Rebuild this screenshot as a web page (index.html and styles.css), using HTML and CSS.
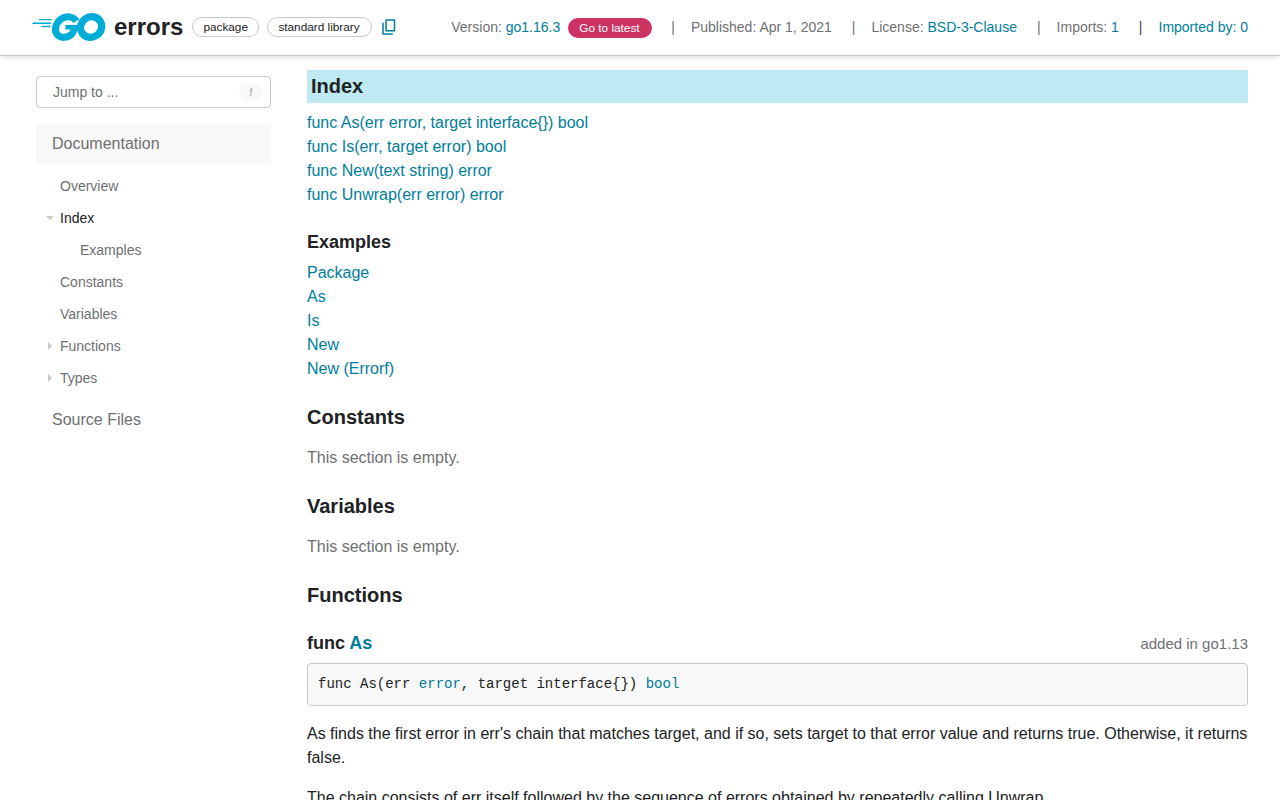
FILE: index.html
```html
<!DOCTYPE html>
<html lang="en">
<head>
<meta charset="utf-8">
<title>errors package</title>
<link rel="stylesheet" href="styles.css">
</head>
<body>
<header class="header">
  <svg class="logo" viewBox="0 0 74 30" aria-label="Go">
    <g fill="#00add8">
      <path d="M6.2 8.3l1-1.4h12.7l-.8 1.4zM0 11.9l1-1.4h18.3l-.5 1.4zM9.3 15.2l.8-1.4h8.4l-.2 1.4z"/>
    </g>
    <g fill="none" stroke="#00add8">
      <ellipse cx="59.1" cy="15" rx="10.8" ry="10.1" stroke-width="7.2" transform="rotate(-32 59.1 15)"/>
      <path stroke-width="7" d="M44.4 9.2C41.4 4.3 33.9 3.3 28.8 7.2C23.4 11.4 21.8 18.4 25.2 22.6C28.7 26.7 35.6 26 39.6 22.2C41.2 20.6 42 18.6 42.4 15.6"/>
      <path stroke-width="4.6" d="M33.4 15.2h12.3"/>
    </g>
  </svg>
  <h1 class="title">errors</h1>
  <span class="chip">package</span>
  <span class="chip chip-lib">standard library</span>
  <svg class="copy" viewBox="0 0 14 16" fill="none" stroke="#007d9c" stroke-width="1.5"><path d="M4.1 1.05h8.4v10.6H4.1zM1 3.8v11.1h9.8"/></svg>
  <div class="details">
    <span>Version: <a>go1.16.3</a></span><span class="latest">Go to latest</span>
    <span class="bar bar-1">|</span><span>Published: Apr 1, 2021</span>
    <span class="bar">|</span><span>License: <a>BSD-3-Clause</a></span>
    <span class="bar">|</span><span>Imports: <a>1</a></span>
    <span class="bar bar-dark">|</span><a>Imported by: 0</a>
  </div>
</header>
<div class="layout">
  <nav class="side">
    <div class="jump"><span>Jump to ...</span><kbd class="key">f</kbd></div>
    <div class="group group-on">Documentation</div>
    <ul class="tree">
      <li>Overview</li>
      <li class="on"><svg class="arrow" viewBox="0 0 10 10"><path d="M1 3h8L5 7z"/></svg>Index</li>
      <li class="sub">Examples</li>
      <li>Constants</li>
      <li>Variables</li>
      <li><svg class="arrow" viewBox="0 0 10 10"><path d="M3 1v8l4-4z"/></svg>Functions</li>
      <li><svg class="arrow" viewBox="0 0 10 10"><path d="M3 1v8l4-4z"/></svg>Types</li>
    </ul>
    <div class="group">Source Files</div>
  </nav>
  <main class="main">
    <h2 class="target">Index</h2>
    <ul class="list">
      <li><a>func As(err error, target interface{}) bool</a></li>
      <li><a>func Is(err, target error) bool</a></li>
      <li><a>func New(text string) error</a></li>
      <li><a>func Unwrap(err error) error</a></li>
    </ul>
    <h3 class="examples">Examples</h3>
    <ul class="list">
      <li><a>Package</a></li>
      <li><a>As</a></li>
      <li><a>Is</a></li>
      <li><a>New</a></li>
      <li><a>New (Errorf)</a></li>
    </ul>
    <h2 class="section">Constants</h2>
    <p class="empty">This section is empty.</p>
    <h2 class="section">Variables</h2>
    <p class="empty">This section is empty.</p>
    <h2 class="section">Functions</h2>
    <h3 class="func"><span>func <a>As</a></span><span class="since">added in go1.13</span></h3>
    <pre class="code">func As(err <a>error</a>, target interface{}) <a>bool</a></pre>
    <p class="text">As finds the first error in err's chain that matches target, and if so, sets target to that error value and returns true. Otherwise, it returns false.</p>
    <p class="text">The chain consists of err itself followed by the sequence of errors obtained by repeatedly calling Unwrap.</p>
  </main>
</div>
</body>
</html>
```
FILE: styles.css
```css
* { box-sizing: border-box; }
html, body { height: 100%; }
body {
  margin: 0;
  display: flex;
  flex-direction: column;
  overflow: hidden;
  background: #fff;
  color: #202224;
  font: 16px/24px Arial, "Liberation Sans", sans-serif;
}
h1, h2, h3, p, ul, pre { margin: 0; padding: 0; }
ul { list-style: none; }
a { color: #007d9c; }
.header {
  flex: none;
  display: flex;
  align-items: center;
  height: 56px;
  padding: 0 32px;
  padding-bottom: 1px;
  border-bottom: 1px solid #c6c8ca;
  box-shadow: 0 2px 5px rgba(0, 0, 0, .12);
}
.logo { width: 74px; height: 30px; }
.title { margin-left: 8px; font-size: 24px; line-height: 30px; }
.chip {
  width: 67px;
  height: 20px;
  margin-left: 9px;
  padding-left: 10px;
  border: 1px solid #c6c8ca;
  border-radius: 10px;
  font-size: 11.8px;
  line-height: 19px;
  white-space: nowrap;
}
.chip-lib { width: 105px; margin-left: 8px; }
.copy { width: 14px; height: 16px; margin-left: 10px; }
.details {
  display: flex;
  align-items: center;
  margin-left: auto;
  color: #6e7072;
  font-size: 14px;
  line-height: 20px;
}
.latest {
  width: 84px;
  height: 20px;
  margin: 2px 0 0 8px;
  padding-left: 11px;
  border-radius: 10px;
  background: #ce3262;
  color: #fff;
  font-size: 11.8px;
}
.bar { margin: 0 16px 0 20px; }
.bar-1 { margin-left: 19px; }
.bar-dark { color: #3e4042; }
.layout { display: flex; }
.side { flex: none; width: 235px; margin: 20px 36px 0; }
.jump {
  display: flex;
  align-items: center;
  justify-content: space-between;
  height: 32px;
  padding: 0 7px 0 16px;
  border: 1px solid #c6c8ca;
  border-radius: 4px;
  color: #6e7072;
  font-size: 14px;
}
.key {
  width: 24px;
  height: 16px;
  border-radius: 8px;
  background: #f8f8f8;
  color: #a8aaac;
  font: 11px/16px Arial, "Liberation Sans", sans-serif;
  text-align: center;
}
.group { padding-left: 16px; color: #6e7072; line-height: 40px; }
.group-on { margin-top: 16px; background: #f8f8f8; }
.tree { padding: 6px 0; color: #6e7072; font-size: 14px; line-height: 32px; }
.tree li { position: relative; padding-left: 24px; }
.tree .sub { padding-left: 44px; }
.tree .on { color: #202224; }
.arrow { position: absolute; left: 9px; top: 11px; width: 10px; height: 10px; fill: #c6c8ca; }
.main { flex: none; width: 941px; padding-top: 14px; }
.target { height: 33px; padding-left: 4px; background: #bfeaf4; font-size: 20px; line-height: 33px; }
.list { margin-top: 8px; }
.examples { margin-top: 23px; font-size: 18px; line-height: 24px; }
.examples + .list { margin-top: 7px; }
.section { margin-top: 24px; font-size: 20px; line-height: 24px; }
.empty { margin-top: 17px; color: #6e7072; }
.func {
  display: flex;
  justify-content: space-between;
  margin-top: 24px;
  font-size: 18px;
}
.since { padding-top: 1px; color: #6e7072; font-size: 15px; font-weight: 400; }
.code {
  height: 43px;
  margin-top: 7px;
  padding: 10px;
  border: 1px solid #c6c8ca;
  border-radius: 4px;
  background: #f8f8f8;
  font: 14px/21px "Liberation Mono", monospace;
}
.text { margin-top: 16px; }
```
